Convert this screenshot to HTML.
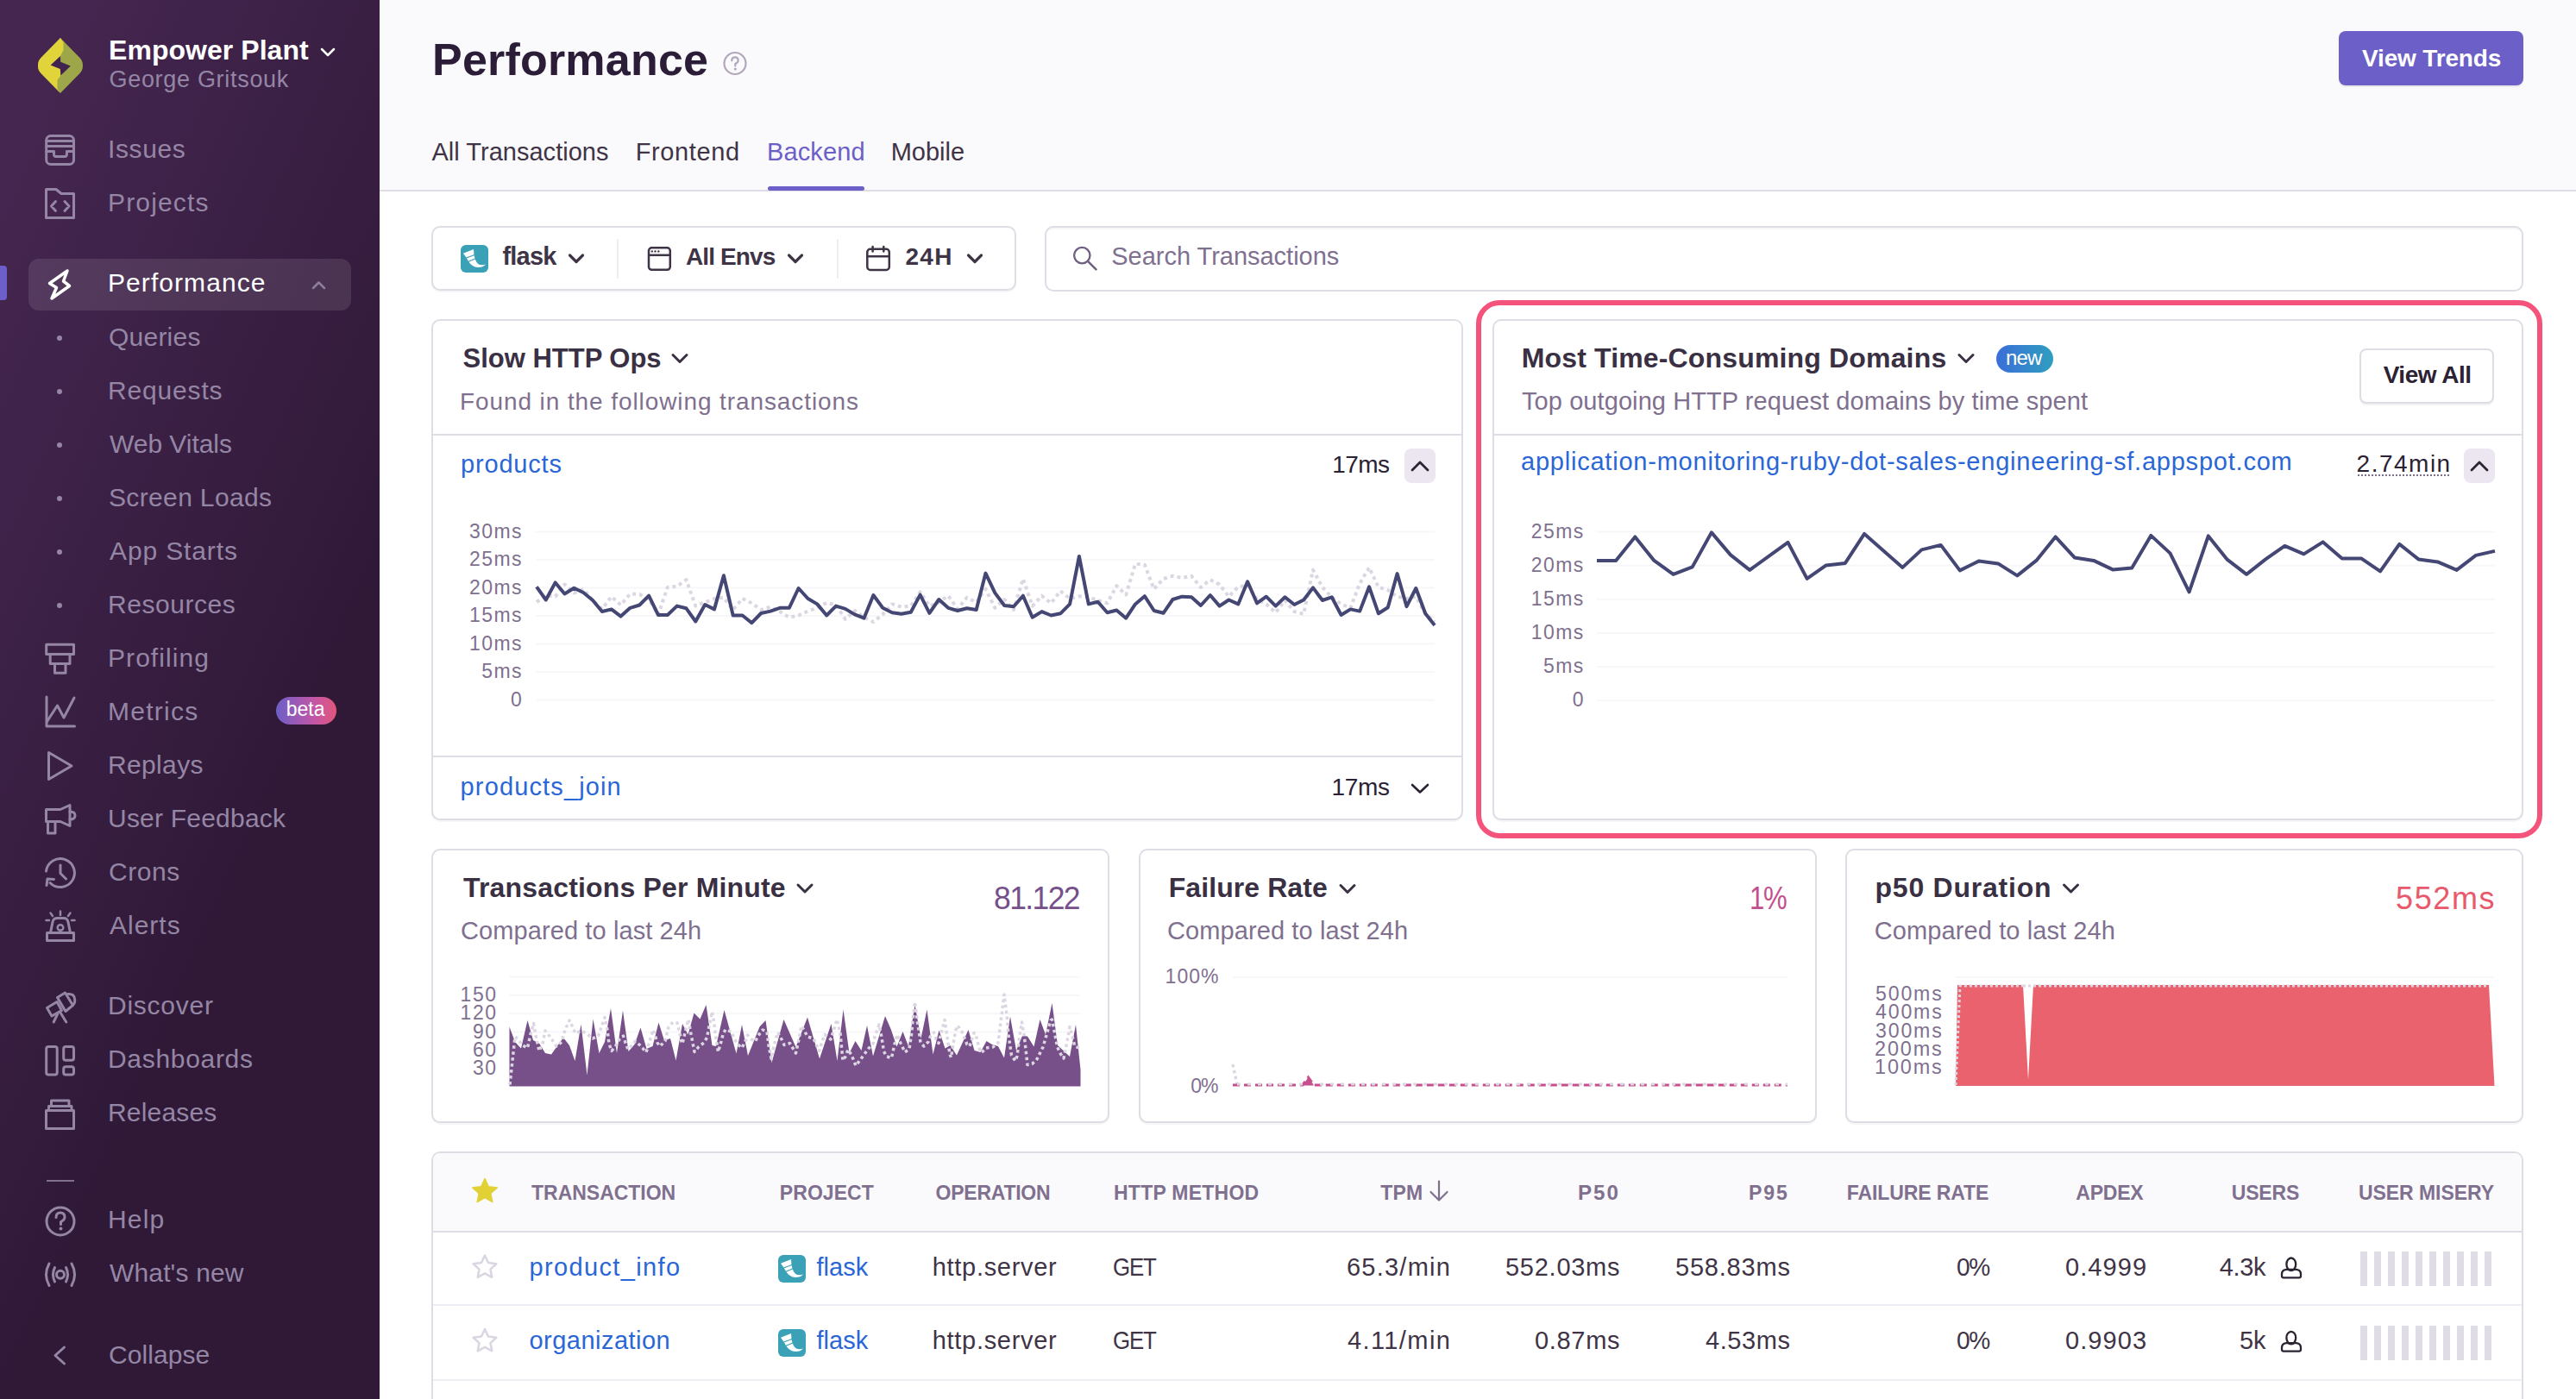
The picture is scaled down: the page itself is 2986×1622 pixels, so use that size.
<!DOCTYPE html>
<html><head><meta charset="utf-8"><style>
html,body{margin:0;padding:0;}
body{width:2986px;height:1622px;overflow:hidden;position:relative;background:#fff;font-family:"Liberation Sans", sans-serif;}
</style></head><body>
<div style="position:absolute;left:0px;top:0px;width:440px;height:1622px;background:linear-gradient(294.17deg,#2f1937 35.57%,#452650 92.42%,#452650 92.42%);z-index:0"></div><div style="position:absolute;left:440px;top:0px;width:2546px;height:220px;background:#FAF9FB;border-bottom:2px solid #E0DCE5;z-index:0"></div><div style="position:absolute;left:33px;top:300px;width:374px;height:60px;background:rgba(255,255,255,0.10);border-radius:12px;z-index:1"></div><div style="position:absolute;left:0px;top:308px;width:8px;height:40px;background:#6C5FC7;border-radius:0 4px 4px 0;z-index:1"></div><div style="position:absolute;left:320px;top:808px;width:70px;height:32px;background:linear-gradient(90deg,#6C5FC7,#C056A8 60%,#E1567C);border-radius:16px;z-index:1"></div><div style="position:absolute;left:2711px;top:36px;width:214px;height:63px;background:#6C5FC7;border-radius:8px;box-shadow:0 2px 0 rgba(43,34,51,0.08);z-index:1"></div><div style="position:absolute;left:890px;top:216px;width:112px;height:5px;background:#6C5FC7;border-radius:3px;z-index:2"></div><div style="position:absolute;left:500px;top:262px;width:678px;height:75px;box-sizing:border-box;border:2px solid #E0DCE5;border-radius:10px;background:#fff;box-shadow:0 2px 0 rgba(43,34,51,0.04);z-index:1"></div><div style="position:absolute;left:715px;top:277px;width:2px;height:46px;background:#F0ECF3;z-index:2"></div><div style="position:absolute;left:970px;top:277px;width:2px;height:46px;background:#F0ECF3;z-index:2"></div><div style="position:absolute;left:1211px;top:262px;width:1714px;height:76px;box-sizing:border-box;border:2px solid #E0DCE5;border-radius:10px;background:#fff;box-shadow:inset 0 2px 0 rgba(43,34,51,0.04);z-index:1"></div><div style="position:absolute;left:500px;top:370px;width:1196px;height:581px;box-sizing:border-box;border:2px solid #E0DCE5;border-radius:10px;background:#fff;box-shadow:0 2px 0 rgba(43,34,51,0.04);z-index:1"></div><div style="position:absolute;left:502px;top:503px;width:1192px;height:2px;background:#E0DCE5;z-index:2"></div><div style="position:absolute;left:1628px;top:520px;width:36px;height:40px;background:#EBE6EF;border-radius:8px;z-index:2"></div><div style="position:absolute;left:502px;top:876px;width:1192px;height:2px;background:#E0DCE5;z-index:2"></div><div style="position:absolute;left:1711px;top:348px;width:1236px;height:624px;box-sizing:border-box;border:6px solid #F4547B;border-radius:27px;z-index:4"></div><div style="position:absolute;left:1730px;top:370px;width:1195px;height:581px;box-sizing:border-box;border:2px solid #E0DCE5;border-radius:10px;background:#fff;box-shadow:0 2px 0 rgba(43,34,51,0.04);z-index:1"></div><div style="position:absolute;left:2314px;top:400px;width:66px;height:32px;background:linear-gradient(90deg,#3B6ED8,#2F9EC0);border-radius:16px;z-index:2"></div><div style="position:absolute;left:2735px;top:404px;width:156px;height:64px;box-sizing:border-box;border:2px solid #E0DCE5;border-radius:8px;background:#fff;box-shadow:0 2px 0 rgba(43,34,51,0.06);z-index:2"></div><div style="position:absolute;left:1732px;top:503px;width:1191px;height:2px;background:#E0DCE5;z-index:2"></div><div style="position:absolute;left:2733px;top:550px;width:106px;height:2px;background:repeating-linear-gradient(90deg,#80708F 0 2px,transparent 2px 4px);z-index:6"></div><div style="position:absolute;left:2856px;top:520px;width:36px;height:40px;background:#EBE6EF;border-radius:8px;z-index:2"></div><div style="position:absolute;left:500px;top:984px;width:786px;height:318px;box-sizing:border-box;border:2px solid #E0DCE5;border-radius:10px;background:#fff;box-shadow:0 2px 0 rgba(43,34,51,0.04);z-index:1"></div><div style="position:absolute;left:1320px;top:984px;width:786px;height:318px;box-sizing:border-box;border:2px solid #E0DCE5;border-radius:10px;background:#fff;box-shadow:0 2px 0 rgba(43,34,51,0.04);z-index:1"></div><div style="position:absolute;left:2139px;top:984px;width:786px;height:318px;box-sizing:border-box;border:2px solid #E0DCE5;border-radius:10px;background:#fff;box-shadow:0 2px 0 rgba(43,34,51,0.04);z-index:1"></div><div style="position:absolute;left:500px;top:1335px;width:2425px;height:400px;box-sizing:border-box;border:2px solid #E0DCE5;border-radius:10px;background:#fff;overflow:hidden;z-index:1"></div><div style="position:absolute;left:502px;top:1337px;width:2421px;height:91px;background:#FAF9FB;border-radius:8px 8px 0 0;z-index:1"></div><div style="position:absolute;left:502px;top:1427px;width:2421px;height:2px;background:#E0DCE5;z-index:2"></div><div style="position:absolute;left:502px;top:1512px;width:2421px;height:2px;background:#F0ECF3;z-index:2"></div><div style="position:absolute;left:502px;top:1599px;width:2421px;height:2px;background:#F0ECF3;z-index:2"></div><div style="position:absolute;left:2736px;top:1451.2px;width:8px;height:40px;background:#E0DCE5;z-index:2"></div><div style="position:absolute;left:2752px;top:1451.2px;width:8px;height:40px;background:#E0DCE5;z-index:2"></div><div style="position:absolute;left:2768px;top:1451.2px;width:8px;height:40px;background:#E0DCE5;z-index:2"></div><div style="position:absolute;left:2784px;top:1451.2px;width:8px;height:40px;background:#E0DCE5;z-index:2"></div><div style="position:absolute;left:2800px;top:1451.2px;width:8px;height:40px;background:#E0DCE5;z-index:2"></div><div style="position:absolute;left:2816px;top:1451.2px;width:8px;height:40px;background:#E0DCE5;z-index:2"></div><div style="position:absolute;left:2832px;top:1451.2px;width:8px;height:40px;background:#E0DCE5;z-index:2"></div><div style="position:absolute;left:2848px;top:1451.2px;width:8px;height:40px;background:#E0DCE5;z-index:2"></div><div style="position:absolute;left:2864px;top:1451.2px;width:8px;height:40px;background:#E0DCE5;z-index:2"></div><div style="position:absolute;left:2880px;top:1451.2px;width:8px;height:40px;background:#E0DCE5;z-index:2"></div><div style="position:absolute;left:2736px;top:1536.5px;width:8px;height:40px;background:#E0DCE5;z-index:2"></div><div style="position:absolute;left:2752px;top:1536.5px;width:8px;height:40px;background:#E0DCE5;z-index:2"></div><div style="position:absolute;left:2768px;top:1536.5px;width:8px;height:40px;background:#E0DCE5;z-index:2"></div><div style="position:absolute;left:2784px;top:1536.5px;width:8px;height:40px;background:#E0DCE5;z-index:2"></div><div style="position:absolute;left:2800px;top:1536.5px;width:8px;height:40px;background:#E0DCE5;z-index:2"></div><div style="position:absolute;left:2816px;top:1536.5px;width:8px;height:40px;background:#E0DCE5;z-index:2"></div><div style="position:absolute;left:2832px;top:1536.5px;width:8px;height:40px;background:#E0DCE5;z-index:2"></div><div style="position:absolute;left:2848px;top:1536.5px;width:8px;height:40px;background:#E0DCE5;z-index:2"></div><div style="position:absolute;left:2864px;top:1536.5px;width:8px;height:40px;background:#E0DCE5;z-index:2"></div><div style="position:absolute;left:2880px;top:1536.5px;width:8px;height:40px;background:#E0DCE5;z-index:2"></div><svg style="position:absolute;left:0;top:0;z-index:3" width="2986" height="1622" viewBox="0 0 2986 1622"><rect x="621" y="615.5" width="1042" height="2" fill="#F7F6F9"/><rect x="621" y="648.0" width="1042" height="2" fill="#F7F6F9"/><rect x="621" y="680.5" width="1042" height="2" fill="#F7F6F9"/><rect x="621" y="713.1" width="1042" height="2" fill="#F7F6F9"/><rect x="621" y="745.6" width="1042" height="2" fill="#F7F6F9"/><rect x="621" y="778.1" width="1042" height="2" fill="#F7F6F9"/><rect x="621" y="810.6" width="1042" height="2" fill="#F7F6F9"/><path d="M622.0,698.0 L632.8,690.6 L643.7,691.7 L654.5,677.6 L665.4,687.4 L676.2,683.0 L687.1,696.0 L697.9,706.0 L708.8,691.7 L719.6,701.5 L730.4,688.5 L741.3,689.0 L752.1,695.0 L763.0,712.4 L773.8,680.9 L784.7,679.8 L795.5,672.2 L806.3,702.6 L817.2,698.3 L828.0,694.0 L838.9,692.8 L849.7,707.0 L860.6,694.0 L871.4,699.3 L882.2,707.0 L893.1,703.7 L903.9,709.0 L914.8,715.7 L925.6,713.5 L936.5,708.6 L947.3,704.8 L958.2,698.8 L969.0,701.5 L979.8,717.8 L990.7,708.0 L1001.5,715.7 L1012.4,721.0 L1023.2,712.4 L1034.1,700.4 L1044.9,703.7 L1055.8,702.6 L1066.6,686.3 L1077.4,702.6 L1088.3,698.3 L1099.1,690.7 L1110.0,706.0 L1120.8,692.8 L1131.7,698.3 L1142.5,683.0 L1153.3,704.8 L1164.2,695.0 L1175.0,707.0 L1185.9,671.0 L1196.7,702.6 L1207.6,690.7 L1218.4,699.3 L1229.2,685.2 L1240.1,694.0 L1250.9,691.2 L1261.8,692.3 L1272.6,696.0 L1283.5,699.3 L1294.3,679.2 L1305.2,689.6 L1316.0,653.7 L1326.8,654.8 L1337.7,683.0 L1348.5,671.0 L1359.4,667.8 L1370.2,670.0 L1381.1,667.8 L1391.9,680.9 L1402.8,672.2 L1413.6,677.6 L1424.4,691.7 L1435.3,680.3 L1446.1,678.7 L1457.0,695.0 L1467.8,700.4 L1478.7,710.2 L1489.5,696.0 L1500.3,709.1 L1511.2,711.8 L1522.0,660.8 L1532.9,680.9 L1543.7,692.3 L1554.6,700.4 L1565.4,704.8 L1576.2,676.5 L1587.1,658.0 L1597.9,680.9 L1608.8,684.1 L1619.6,691.7 L1630.5,694.0 L1641.3,691.7 L1652.2,711.3 L1663.0,721.0" stroke="#DCD6E2" fill="none" stroke-width="4" stroke-dasharray="4 4" stroke-linejoin="round"/><path d="M622.0,680.3 L632.8,695.5 L643.7,675.4 L654.5,688.5 L665.4,681.7 L676.2,687.0 L687.1,696.0 L697.9,709.0 L708.8,706.4 L719.6,714.6 L730.4,704.8 L741.3,701.5 L752.1,690.6 L763.0,713.0 L773.8,713.0 L784.7,702.6 L795.5,705.3 L806.3,720.5 L817.2,701.0 L828.0,706.4 L838.9,667.3 L849.7,713.5 L860.6,713.5 L871.4,722.2 L882.2,711.0 L893.1,708.6 L903.9,704.8 L914.8,704.8 L925.6,682.0 L936.5,694.0 L947.3,700.4 L958.2,713.5 L969.0,702.6 L979.8,705.9 L990.7,712.4 L1001.5,716.7 L1012.4,690.0 L1023.2,704.8 L1034.1,710.2 L1044.9,711.8 L1055.8,709.7 L1066.6,689.6 L1077.4,710.8 L1088.3,695.0 L1099.1,704.8 L1110.0,708.0 L1120.8,705.3 L1131.7,707.0 L1142.5,664.6 L1153.3,687.4 L1164.2,702.0 L1175.0,703.2 L1185.9,690.7 L1196.7,715.7 L1207.6,709.1 L1218.4,713.5 L1229.2,711.3 L1240.1,700.4 L1250.9,645.0 L1261.8,700.4 L1272.6,697.7 L1283.5,710.2 L1294.3,707.5 L1305.2,716.7 L1316.0,700.4 L1326.8,691.2 L1337.7,708.0 L1348.5,710.8 L1359.4,695.0 L1370.2,691.7 L1381.1,692.3 L1391.9,702.0 L1402.8,690.0 L1413.6,702.6 L1424.4,695.5 L1435.3,700.4 L1446.1,674.3 L1457.0,699.3 L1467.8,691.7 L1478.7,702.6 L1489.5,692.3 L1500.3,701.0 L1511.2,695.5 L1522.0,681.4 L1532.9,696.0 L1543.7,692.3 L1554.6,713.0 L1565.4,706.4 L1576.2,708.6 L1587.1,680.3 L1597.9,711.3 L1608.8,704.2 L1619.6,665.1 L1630.5,703.2 L1641.3,682.0 L1652.2,711.3 L1663.0,724.9" stroke="#444674" fill="none" stroke-width="4" stroke-linejoin="round"/><rect x="1851" y="615.5" width="1041" height="2" fill="#F7F6F9"/><rect x="1851" y="654.6" width="1041" height="2" fill="#F7F6F9"/><rect x="1851" y="693.8" width="1041" height="2" fill="#F7F6F9"/><rect x="1851" y="732.9" width="1041" height="2" fill="#F7F6F9"/><rect x="1851" y="772.1" width="1041" height="2" fill="#F7F6F9"/><rect x="1851" y="811.2" width="1041" height="2" fill="#F7F6F9"/><path d="M1851.0,649.9 L1873.1,649.9 L1895.3,622.4 L1917.4,649.9 L1939.6,665.9 L1961.7,657.4 L1983.9,617.4 L2006.0,643.4 L2028.2,660.9 L2050.3,644.9 L2072.5,628.9 L2094.6,670.9 L2116.8,655.4 L2138.9,652.9 L2161.1,618.9 L2183.2,638.4 L2205.4,657.9 L2227.5,637.4 L2249.7,631.9 L2271.8,661.4 L2294.0,650.4 L2316.1,653.4 L2338.3,667.4 L2360.4,649.9 L2382.6,622.4 L2404.7,646.4 L2426.9,649.9 L2449.0,660.4 L2471.2,658.4 L2493.3,620.9 L2515.5,641.4 L2537.6,686.3 L2559.8,621.4 L2581.9,648.9 L2604.1,665.9 L2626.2,648.4 L2648.4,632.9 L2670.5,642.4 L2692.7,628.4 L2714.8,647.4 L2737.0,647.4 L2759.1,662.4 L2781.3,630.9 L2803.4,648.4 L2825.6,651.4 L2847.7,660.9 L2869.9,643.9 L2892.0,638.9" stroke="#444674" fill="none" stroke-width="4" stroke-linejoin="round"/><rect x="590" y="1131.6" width="662" height="2" fill="#F7F6F9"/><rect x="590" y="1152.9" width="662" height="2" fill="#F7F6F9"/><rect x="590" y="1174.2" width="662" height="2" fill="#F7F6F9"/><rect x="590" y="1195.5" width="662" height="2" fill="#F7F6F9"/><rect x="590" y="1216.8" width="662" height="2" fill="#F7F6F9"/><rect x="590" y="1238.1" width="662" height="2" fill="#F7F6F9"/><path d="M590.5,1259.5 L590.5,1190.5 L597.0,1208.0 L604.0,1215.5 L611.5,1183.0 L618.0,1206.0 L625.0,1209.5 L632.0,1221.0 L639.0,1222.5 L653.0,1203.0 L660.0,1212.0 L666.5,1230.0 L673.5,1187.5 L680.5,1246.5 L687.5,1181.5 L694.5,1221.0 L701.0,1208.0 L708.0,1169.0 L715.0,1221.0 L722.0,1171.5 L728.5,1219.0 L735.5,1211.0 L742.5,1191.5 L749.5,1216.0 L756.5,1213.0 L763.5,1185.5 L770.0,1206.5 L777.0,1204.0 L783.5,1229.5 L791.0,1187.0 L797.5,1199.5 L804.5,1174.5 L811.5,1181.5 L818.5,1165.0 L825.5,1212.0 L830.0,1213.0 L839.5,1171.0 L853.5,1221.5 L860.0,1188.0 L867.0,1224.0 L880.5,1190.5 L887.5,1183.0 L894.5,1232.0 L908.5,1182.0 L922.5,1214.0 L936.0,1179.5 L950.0,1227.5 L963.5,1187.0 L970.5,1230.0 L977.5,1170.5 L984.5,1221.0 L991.5,1207.0 L998.5,1218.0 L1005.0,1189.0 L1012.0,1224.5 L1026.0,1178.0 L1033.0,1194.0 L1039.5,1213.5 L1046.5,1196.0 L1053.0,1213.0 L1060.5,1165.0 L1067.5,1204.0 L1074.5,1170.5 L1081.5,1222.5 L1088.5,1194.5 L1095.5,1215.5 L1101.5,1212.0 L1109.0,1223.5 L1122.5,1194.0 L1129.5,1218.0 L1136.5,1220.0 L1143.5,1207.0 L1150.0,1211.0 L1157.0,1213.0 L1164.0,1226.5 L1171.0,1178.5 L1178.0,1218.0 L1185.0,1201.0 L1191.0,1201.5 L1198.5,1213.5 L1205.5,1182.0 L1212.0,1199.5 L1219.5,1163.0 L1226.0,1212.0 L1233.0,1218.5 L1240.0,1225.0 L1247.0,1188.0 L1252.5,1240.0 L1252.5,1259.5 Z" stroke="none" fill="#77508A" stroke-width="0" /><path d="M591.0,1257.5 L597.0,1202.0 L601.0,1205.0 L605.0,1211.5 L611.5,1215.0 L615.0,1199.0 L618.5,1186.5 L621.5,1203.0 L625.0,1218.5 L629.0,1210.0 L632.0,1195.0 L636.0,1200.0 L641.0,1207.0 L645.0,1213.0 L651.0,1208.0 L655.0,1194.0 L660.0,1183.0 L664.0,1191.0 L667.0,1198.0 L673.5,1195.0 L680.5,1198.5 L687.0,1204.0 L693.5,1201.0 L696.0,1194.0 L701.0,1179.5 L704.0,1194.0 L706.0,1210.0 L709.0,1218.5 L714.0,1212.0 L718.0,1205.0 L722.5,1201.0 L725.0,1209.0 L728.0,1216.5 L732.0,1212.5 L736.5,1207.0 L742.5,1212.5 L749.0,1220.0 L754.0,1204.0 L757.0,1194.0 L759.5,1201.0 L762.0,1209.0 L765.0,1213.0 L771.0,1207.0 L775.0,1191.0 L780.0,1185.0 L785.0,1186.0 L787.0,1194.0 L790.5,1210.0 L792.5,1205.0 L794.0,1197.0 L798.0,1182.0 L800.5,1196.5 L802.0,1204.0 L805.0,1219.5 L810.0,1213.5 L816.0,1209.0 L819.5,1203.0 L821.0,1195.0 L822.5,1187.0 L825.5,1173.0 L828.0,1188.0 L830.0,1204.0 L832.5,1219.5 L836.0,1207.5 L838.0,1199.5 L841.0,1193.5 L848.0,1196.5 L851.0,1204.0 L855.0,1210.5 L860.0,1215.0 L864.0,1207.0 L866.5,1200.0 L871.0,1205.0 L875.5,1207.5 L879.0,1200.5 L884.0,1194.0 L889.0,1196.0 L891.0,1212.0 L894.0,1227.5 L897.0,1213.0 L901.5,1197.0 L906.0,1205.0 L909.0,1211.5 L915.5,1209.5 L922.5,1221.0 L926.0,1205.0 L929.0,1189.5 L932.5,1195.0 L936.0,1202.0 L943.0,1204.0 L949.5,1218.5 L953.0,1207.5 L956.0,1199.5 L963.0,1205.0 L967.5,1191.0 L970.0,1182.0 L974.0,1198.0 L977.0,1229.5 L980.0,1225.0 L983.0,1217.0 L987.0,1223.0 L992.0,1235.5 L997.0,1229.0 L1006.5,1216.0 L1012.0,1210.0 L1014.0,1202.0 L1019.0,1188.0 L1022.0,1203.0 L1024.5,1219.0 L1028.0,1225.0 L1033.5,1226.5 L1037.0,1210.5 L1040.0,1199.5 L1043.0,1207.5 L1049.0,1220.0 L1054.0,1216.0 L1056.5,1199.5 L1058.0,1183.5 L1060.5,1161.5 L1063.5,1185.0 L1066.0,1201.0 L1067.0,1208.5 L1071.0,1213.0 L1076.0,1208.0 L1079.0,1200.5 L1082.5,1197.0 L1085.0,1205.0 L1088.0,1209.5 L1092.0,1194.0 L1095.0,1182.5 L1097.5,1199.0 L1101.0,1222.5 L1102.5,1226.0 L1105.0,1210.0 L1108.0,1194.0 L1110.0,1189.0 L1115.0,1196.0 L1121.0,1211.0 L1124.0,1213.0 L1129.0,1197.5 L1131.0,1199.0 L1135.0,1215.0 L1137.5,1220.5 L1143.0,1215.0 L1151.0,1214.0 L1157.0,1209.0 L1160.0,1185.5 L1164.0,1153.0 L1167.0,1176.5 L1169.0,1200.0 L1172.5,1223.5 L1177.0,1230.0 L1179.0,1224.5 L1182.0,1200.5 L1184.5,1185.0 L1187.5,1203.0 L1191.0,1234.5 L1196.5,1233.5 L1202.0,1228.0 L1209.0,1214.0 L1213.5,1198.5 L1218.0,1183.0 L1219.5,1182.0 L1222.5,1197.5 L1225.5,1213.5 L1228.5,1220.5 L1233.0,1227.0 L1236.0,1212.0 L1239.0,1197.0 L1240.0,1190.5 L1244.0,1205.5 L1246.0,1213.5 L1251.5,1215.0" stroke="#DCD6E2" fill="none" stroke-width="3.5" stroke-dasharray="3.5 3.5" stroke-linejoin="round"/><rect x="1429" y="1132" width="643" height="2" fill="#F7F6F9"/><path d="M1429,1234 L1434,1257" stroke="#DCD6E2" fill="none" stroke-width="3.5" stroke-dasharray="3.5 3.5"/><path d="M1429,1258 L1510,1258 L1516.5,1249 L1523,1258 L2072,1258" stroke="#C6508E" fill="none" stroke-width="3" stroke-dasharray="8 5"/><path d="M1429,1257 L2072,1257" stroke="#DCD6E2" fill="none" stroke-width="3" stroke-dasharray="4 8" stroke-dashoffset="7"/><path d="M1510,1258.5 L1516.5,1249 L1523,1258.5 Z" stroke="none" fill="#C6508E" stroke-width="0" /><rect x="2267" y="1132" width="624" height="2" fill="#F7F6F9"/><path d="M2267,1259 L2269,1142 L2345,1142 L2351,1252 L2357,1142 L2885,1142 L2891.5,1259 Z" stroke="none" fill="#E9626E" stroke-width="0" /><path d="M2267,1258 L2272,1143 L2345,1143" stroke="#DCD6E2" fill="none" stroke-width="3" stroke-dasharray="3 3"/><path d="M2357,1143 L2885,1143" stroke="#DCD6E2" fill="none" stroke-width="3" stroke-dasharray="3 3"/><path d="M2345,1143 L2357,1143" stroke="#DCD6E2" fill="none" stroke-width="3" stroke-dasharray="3 3"/></svg><svg style="position:absolute;left:0;top:0;z-index:6" width="2986" height="1622" viewBox="0 0 2986 1622"><path d="M70,44 L47.5,67 Q44,70.5 44,76 Q44,81.5 47.5,85 L70,108 L92.5,85 Q96,81.5 96,76 Q96,70.5 92.5,67 Z" fill="#9DA649"/><path d="M70,44 L47.5,67 Q44,70.5 44,76 Q44,81.5 47.5,85 L70,108 L66.5,103 L66.5,93 L70.4,87.5 L70,65 L73.5,58 L73.5,49 Z" fill="#E1D33A"/><path d="M70,65 L58.6,75.4 L69.8,80 L70.4,87.5 L81.8,76.4 L70.2,71.8 Z" fill="#40244F"/><path d="M373,57 L380,64 L387,57" stroke="#FFFFFF" stroke-width="2.5" fill="none" stroke-linecap="round" stroke-linejoin="round"/><rect x="53.7" y="157.5" width="31.8" height="33" rx="5" stroke="#9586A5" stroke-width="3" fill="none"/><path d="M53.7,163.5 L85.5,163.5 M53.7,169.6 L85.5,169.6" stroke="#9586A5" stroke-width="3" fill="none" stroke-linecap="round" stroke-linejoin="round"/><path d="M53.7,175.6 L62.5,175.6 L62.5,179 Q62.5,181.6 65,181.6 L75,181.6 Q77.4,181.6 77.4,179 L77.4,175.6 L85.5,175.6" stroke="#9586A5" stroke-width="3" fill="none" stroke-linecap="round" stroke-linejoin="round"/><path d="M53.5,219.5 L65,219.5 L71,224.5 L85.5,224.5 L85.5,252.5 L53.5,252.5 Z" stroke="#9586A5" stroke-width="3" fill="none" stroke-linecap="round" stroke-linejoin="round"/><path d="M64.5,233.5 L59.5,239 L64.5,244.5 M75,233.5 L80,239 L75,244.5" stroke="#9586A5" stroke-width="3" fill="none" stroke-linecap="round" stroke-linejoin="round"/><path d="M78,314 L57.5,328.5 L65.5,333.5 L60,346 L80.5,331.5 L73.5,326 Z" stroke="#FFFFFF" stroke-width="3.5" fill="none" stroke-linecap="round" stroke-linejoin="round"/><path d="M363,334 L369.5,327.5 L376,334" stroke="#8D7E9C" stroke-width="2.5" fill="none" stroke-linecap="round" stroke-linejoin="round"/><circle cx="69" cy="392" r="3" fill="#9586A5"/><circle cx="69" cy="454" r="3" fill="#9586A5"/><circle cx="69" cy="516" r="3" fill="#9586A5"/><circle cx="69" cy="578" r="3" fill="#9586A5"/><circle cx="69" cy="640" r="3" fill="#9586A5"/><circle cx="69" cy="702" r="3" fill="#9586A5"/><path d="M53.7,747.3 L85.5,747.3 L85.5,758.5 L53.7,758.5 Z M58.2,758.5 L58.2,769.5 L81,769.5 L81,758.5 M63.5,769.5 L63.5,780.3 L76,780.3 L76,769.5" stroke="#9586A5" stroke-width="3" fill="none" stroke-linecap="round" stroke-linejoin="round"/><path d="M54,808 L54,842 L86.5,842" stroke="#9586A5" stroke-width="3" fill="none" stroke-linecap="round" stroke-linejoin="round"/><path d="M54.5,836.5 L66.5,818 L74,832 L86,809" stroke="#9586A5" stroke-width="3" fill="none" stroke-linecap="round" stroke-linejoin="round"/><path d="M56.5,872.5 L56.5,903.5 L83,888 Z" stroke="#9586A5" stroke-width="3" fill="none" stroke-linecap="round" stroke-linejoin="round"/><path d="M53.5,938.5 L70,938.5 L81,933.5 L81,957.5 L70,952.5 L53.5,952.5 Z" stroke="#9586A5" stroke-width="3" fill="none" stroke-linecap="round" stroke-linejoin="round"/><path d="M81,941 Q87,941 87,945.5 Q87,950 81,950" stroke="#9586A5" stroke-width="3" fill="none" stroke-linecap="round" stroke-linejoin="round"/><path d="M55.5,952.5 L55.5,966 L64,966 L64,952.5" stroke="#9586A5" stroke-width="3" fill="none" stroke-linecap="round" stroke-linejoin="round"/><path d="M53.5,1010 A16.5,16.5 0 1 1 58,1023.5" stroke="#9586A5" stroke-width="3" fill="none" stroke-linecap="round" stroke-linejoin="round"/><path d="M70,1003 L70,1012.5 L76.5,1019" stroke="#9586A5" stroke-width="3" fill="none" stroke-linecap="round" stroke-linejoin="round"/><path d="M54,1026.5 L55,1019 L62.5,1019.5" stroke="#9586A5" stroke-width="3" fill="none" stroke-linecap="round" stroke-linejoin="round"/><path d="M54.5,1081.5 L85.5,1081.5 L85.5,1090.5 L54.5,1090.5 Z" stroke="#9586A5" stroke-width="3" fill="none" stroke-linecap="round" stroke-linejoin="round"/><path d="M58.5,1081.5 L61,1069 Q62,1064.5 66,1064.5 L74,1064.5 Q78,1064.5 79,1069 L81.5,1081.5" stroke="#9586A5" stroke-width="3" fill="none" stroke-linecap="round" stroke-linejoin="round"/><circle cx="70" cy="1075.5" r="3.3" stroke="#9586A5" stroke-width="2.5" fill="none"/><path d="M70,1078.8 L70,1081.5" stroke="#9586A5" stroke-width="2.5" fill="none" stroke-linecap="round" stroke-linejoin="round"/><path d="M70,1056.5 L70,1061 M58.5,1058.5 L61,1062 M81.5,1058.5 L79,1062 M53.5,1067 L57,1067 M83,1067 L86.5,1067" stroke="#9586A5" stroke-width="2.5" fill="none" stroke-linecap="round" stroke-linejoin="round"/><path d="M54.5,1168.5 L66,1161.5 L71.5,1171.5 L60,1178 Z" stroke="#9586A5" stroke-width="3" fill="none" stroke-linecap="round" stroke-linejoin="round"/><path d="M66.5,1156.5 L75.5,1151 L84.5,1165.5 L76,1172.5 Z" stroke="#9586A5" stroke-width="3" fill="none" stroke-linecap="round" stroke-linejoin="round"/><path d="M78.5,1152.5 Q86.5,1151.5 86.8,1159.5 Q87,1163 85,1165" stroke="#9586A5" stroke-width="3" fill="none" stroke-linecap="round" stroke-linejoin="round"/><path d="M66.8,1175.5 L62.2,1185 M70,1174 L76.8,1185" stroke="#9586A5" stroke-width="3" fill="none" stroke-linecap="round" stroke-linejoin="round"/><rect x="53.7" y="1213.5" width="12.5" height="32.5" rx="2.5" stroke="#9586A5" stroke-width="3" fill="none"/><rect x="73.7" y="1213.5" width="11.8" height="15.8" rx="2.5" stroke="#9586A5" stroke-width="3" fill="none"/><rect x="73.7" y="1236.8" width="11.8" height="9.2" rx="2.5" stroke="#9586A5" stroke-width="3" fill="none"/><path d="M53.5,1287.5 L85.5,1287.5 L85.5,1308.5 L53.5,1308.5 Z" stroke="#9586A5" stroke-width="3" fill="none" stroke-linecap="round" stroke-linejoin="round"/><path d="M56.5,1287.5 L56.5,1282.5 L83,1282.5 L83,1287.5" stroke="#9586A5" stroke-width="3" fill="none" stroke-linecap="round" stroke-linejoin="round"/><path d="M59.5,1282.5 L59.5,1276 L80,1276 L80,1282.5" stroke="#9586A5" stroke-width="3" fill="none" stroke-linecap="round" stroke-linejoin="round"/><rect x="54" y="1368" width="32" height="2" fill="#9586A5" opacity="0.8"/><circle cx="70" cy="1416" r="16" stroke="#9586A5" stroke-width="3" fill="none"/><path d="M65,1411.5 Q65,1406 70,1406 Q75,1406 75,1411 Q75,1414.5 70.5,1416.5 L70.5,1419.5" stroke="#9586A5" stroke-width="3" fill="none" stroke-linecap="round" stroke-linejoin="round"/><circle cx="70.5" cy="1424.5" r="2" fill="#9586A5"/><circle cx="70" cy="1477.7" r="4.5" stroke="#9586A5" stroke-width="3" fill="none"/><path d="M63.5,1469.5 Q59.5,1477.7 63.5,1486 M76.5,1469.5 Q80.5,1477.7 76.5,1486" stroke="#9586A5" stroke-width="3" fill="none" stroke-linecap="round" stroke-linejoin="round"/><path d="M57,1465 Q50,1477.7 57,1490.5 M83,1465 Q90,1477.7 83,1490.5" stroke="#9586A5" stroke-width="3" fill="none" stroke-linecap="round" stroke-linejoin="round"/><path d="M74.5,1562 L64,1571.5 L74.5,1581" stroke="#9586A5" stroke-width="3" fill="none" stroke-linecap="round" stroke-linejoin="round"/><circle cx="852" cy="73.5" r="12.5" stroke="#B2A7BD" stroke-width="2.2" fill="none"/><path d="M848.3,70.3 Q848.3,66.3 852,66.3 Q855.7,66.3 855.7,70 Q855.7,72.5 852.3,74 L852.3,76.3" stroke="#B2A7BD" stroke-width="2.2" fill="none" stroke-linecap="round"/><circle cx="852.3" cy="80" r="1.5" fill="#B2A7BD"/><g transform="translate(534,284) scale(1.0)"><rect x="0" y="0" width="32" height="32" rx="6" fill="#3BA1B7"/><path d="M3,9.8 L15,5 L15.5,11.5 Q17,20 21,22.5 Q24,24 29,22.5 Q26,26 20,26 Q13,25.5 9,19 Q7,15 3,9.8 Z" fill="#FFFFFF"/><path d="M6.5,15 L16,11.5 M8.5,19.5 L18,15.5" stroke="#3BA1B7" stroke-width="1.3"/></g><path d="M660.5,296 L668,303.5 L675.5,296" stroke="#3E3446" stroke-width="3.2" fill="none" stroke-linecap="round" stroke-linejoin="round"/><rect x="752" y="287.3" width="24.8" height="25.5" rx="3.5" stroke="#3E3446" stroke-width="2.5" fill="none"/><path d="M752,295.8 L776.8,295.8" stroke="#3E3446" stroke-width="2.5"/><circle cx="755.8" cy="291.4" r="1.2" fill="#3E3446"/><circle cx="759.5" cy="291.4" r="1.2" fill="#3E3446"/><circle cx="763.3" cy="291.4" r="1.2" fill="#3E3446"/><path d="M914.5,296 L922,303.5 L929.5,296" stroke="#3E3446" stroke-width="3.2" fill="none" stroke-linecap="round" stroke-linejoin="round"/><rect x="1005.3" y="288.8" width="25.5" height="24.2" rx="3.5" stroke="#3E3446" stroke-width="2.5" fill="none"/><path d="M1005.3,297.2 L1030.8,297.2 M1011.6,286 L1011.6,291.5 M1024.3,286 L1024.3,291.5" stroke="#3E3446" stroke-width="2.5" stroke-linecap="round"/><path d="M1122.5,296 L1130,303.5 L1137.5,296" stroke="#3E3446" stroke-width="3.2" fill="none" stroke-linecap="round" stroke-linejoin="round"/><circle cx="1254.3" cy="296.1" r="9.2" stroke="#6F5F80" stroke-width="2.3" fill="none"/><path d="M1261,302.8 L1270.5,312.3" stroke="#6F5F80" stroke-width="2.5" stroke-linecap="round"/><path d="M780,411.5 L788,419.5 L796,411.5" stroke="#3A3043" stroke-width="3" fill="none" stroke-linecap="round" stroke-linejoin="round"/><path d="M2271,411.5 L2279,419.5 L2287,411.5" stroke="#3A3043" stroke-width="3" fill="none" stroke-linecap="round" stroke-linejoin="round"/><path d="M925,1026 L933,1034 L941,1026" stroke="#3A3043" stroke-width="3" fill="none" stroke-linecap="round" stroke-linejoin="round"/><path d="M1554,1026.5 L1562,1034.5 L1570,1026.5" stroke="#3A3043" stroke-width="3" fill="none" stroke-linecap="round" stroke-linejoin="round"/><path d="M2392.5,1026 L2400.5,1034 L2408.5,1026" stroke="#3A3043" stroke-width="3" fill="none" stroke-linecap="round" stroke-linejoin="round"/><path d="M1637,545 L1646,536 L1655,545" stroke="#2B2233" stroke-width="2.8" fill="none" stroke-linecap="round" stroke-linejoin="round"/><path d="M2865,545 L2874,536 L2883,545" stroke="#2B2233" stroke-width="2.8" fill="none" stroke-linecap="round" stroke-linejoin="round"/><path d="M1637,910 L1646,918.5 L1655,910" stroke="#2B2233" stroke-width="2.6" fill="none" stroke-linecap="round" stroke-linejoin="round"/><path d="M562.0,1366.5 L566.2,1375.7 L576.3,1376.9 L568.8,1383.7 L570.8,1393.6 L562.0,1388.7 L553.2,1393.6 L555.2,1383.7 L547.7,1376.9 L557.8,1375.7 Z" fill="#E2D135" stroke="#E2D135" stroke-width="1.5" stroke-linejoin="round"/><path d="M562.0,1455.5 L566.0,1464.0 L575.3,1465.2 L568.5,1471.6 L570.2,1480.8 L562.0,1476.3 L553.8,1480.8 L555.5,1471.6 L548.7,1465.2 L558.0,1464.0 Z" fill="none" stroke="#DBD6E1" stroke-width="2.6" stroke-linejoin="round"/><path d="M562.0,1541.0 L566.0,1549.5 L575.3,1550.7 L568.5,1557.1 L570.2,1566.3 L562.0,1561.8 L553.8,1566.3 L555.5,1557.1 L548.7,1550.7 L558.0,1549.5 Z" fill="none" stroke="#DBD6E1" stroke-width="2.6" stroke-linejoin="round"/><g transform="translate(902,1455) scale(1.0)"><rect x="0" y="0" width="32" height="32" rx="6" fill="#3BA1B7"/><path d="M3,9.8 L15,5 L15.5,11.5 Q17,20 21,22.5 Q24,24 29,22.5 Q26,26 20,26 Q13,25.5 9,19 Q7,15 3,9.8 Z" fill="#FFFFFF"/><path d="M6.5,15 L16,11.5 M8.5,19.5 L18,15.5" stroke="#3BA1B7" stroke-width="1.3"/></g><g transform="translate(902,1541) scale(1.0)"><rect x="0" y="0" width="32" height="32" rx="6" fill="#3BA1B7"/><path d="M3,9.8 L15,5 L15.5,11.5 Q17,20 21,22.5 Q24,24 29,22.5 Q26,26 20,26 Q13,25.5 9,19 Q7,15 3,9.8 Z" fill="#FFFFFF"/><path d="M6.5,15 L16,11.5 M8.5,19.5 L18,15.5" stroke="#3BA1B7" stroke-width="1.3"/></g><ellipse cx="2655.8" cy="1465.8" rx="5.4" ry="7.3" stroke="#2B2233" stroke-width="2.3" fill="none"/><path d="M2656,1471.8 L2650,1471.8 Q2645,1472.3 2645,1477.3 L2645,1479.3 Q2645,1481.3 2647,1481.3 L2665,1481.3 Q2667,1481.3 2667,1479.3 L2667,1477.3 Q2667,1472.3 2662,1471.8 Z" stroke="#2B2233" stroke-width="2.3" fill="none"/><ellipse cx="2655.8" cy="1551.1" rx="5.4" ry="7.3" stroke="#2B2233" stroke-width="2.3" fill="none"/><path d="M2656,1557.1 L2650,1557.1 Q2645,1557.6 2645,1562.6 L2645,1564.6 Q2645,1566.6 2647,1566.6 L2665,1566.6 Q2667,1566.6 2667,1564.6 L2667,1562.6 Q2667,1557.6 2662,1557.1 Z" stroke="#2B2233" stroke-width="2.3" fill="none"/><path d="M1668,1369.5 L1668,1391 M1658.5,1382 L1668,1391.5 L1677.5,1382" stroke="#80708F" stroke-width="2.2" fill="none" stroke-linecap="round" stroke-linejoin="round"/></svg>
<div style="position:absolute;left:126.00px;top:41.61px;font-size:32px;line-height:32px;font-weight:700;color:#FFFFFF;letter-spacing:0.042px;white-space:nowrap;z-index:5;">Empower Plant</div><div style="position:absolute;left:126.50px;top:78.74px;font-size:27px;line-height:27px;font-weight:400;color:#9586A5;letter-spacing:0.694px;white-space:nowrap;z-index:5;">George Gritsouk</div><div style="position:absolute;left:125.00px;top:157.60px;font-size:30px;line-height:30px;font-weight:400;color:#9586A5;letter-spacing:0.619px;white-space:nowrap;z-index:5;">Issues</div><div style="position:absolute;left:125.00px;top:219.60px;font-size:30px;line-height:30px;font-weight:400;color:#9586A5;letter-spacing:1.162px;white-space:nowrap;z-index:5;">Projects</div><div style="position:absolute;left:125.00px;top:313.41px;font-size:30px;line-height:30px;font-weight:400;color:#FFFFFF;letter-spacing:1.065px;white-space:nowrap;z-index:5;">Performance</div><div style="position:absolute;left:126.00px;top:375.61px;font-size:30px;line-height:30px;font-weight:400;color:#9586A5;letter-spacing:0.226px;white-space:nowrap;z-index:5;">Queries</div><div style="position:absolute;left:125.00px;top:437.61px;font-size:30px;line-height:30px;font-weight:400;color:#9586A5;letter-spacing:0.837px;white-space:nowrap;z-index:5;">Requests</div><div style="position:absolute;left:127.00px;top:499.61px;font-size:30px;line-height:30px;font-weight:400;color:#9586A5;letter-spacing:-0.033px;white-space:nowrap;z-index:5;">Web Vitals</div><div style="position:absolute;left:126.00px;top:561.61px;font-size:30px;line-height:30px;font-weight:400;color:#9586A5;letter-spacing:0.352px;white-space:nowrap;z-index:5;">Screen Loads</div><div style="position:absolute;left:127.00px;top:623.61px;font-size:30px;line-height:30px;font-weight:400;color:#9586A5;letter-spacing:0.870px;white-space:nowrap;z-index:5;">App Starts</div><div style="position:absolute;left:125.00px;top:685.61px;font-size:30px;line-height:30px;font-weight:400;color:#9586A5;letter-spacing:0.538px;white-space:nowrap;z-index:5;">Resources</div><div style="position:absolute;left:125.00px;top:747.61px;font-size:30px;line-height:30px;font-weight:400;color:#9586A5;letter-spacing:1.063px;white-space:nowrap;z-index:5;">Profiling</div><div style="position:absolute;left:125.00px;top:809.61px;font-size:30px;line-height:30px;font-weight:400;color:#9586A5;letter-spacing:1.272px;white-space:nowrap;z-index:5;">Metrics</div><div style="position:absolute;left:125.00px;top:871.61px;font-size:30px;line-height:30px;font-weight:400;color:#9586A5;letter-spacing:0.353px;white-space:nowrap;z-index:5;">Replays</div><div style="position:absolute;left:125.00px;top:933.61px;font-size:30px;line-height:30px;font-weight:400;color:#9586A5;letter-spacing:0.215px;white-space:nowrap;z-index:5;">User Feedback</div><div style="position:absolute;left:126.00px;top:995.61px;font-size:30px;line-height:30px;font-weight:400;color:#9586A5;letter-spacing:0.544px;white-space:nowrap;z-index:5;">Crons</div><div style="position:absolute;left:127.00px;top:1057.61px;font-size:30px;line-height:30px;font-weight:400;color:#9586A5;letter-spacing:1.003px;white-space:nowrap;z-index:5;">Alerts</div><div style="position:absolute;left:125.00px;top:1150.61px;font-size:30px;line-height:30px;font-weight:400;color:#9586A5;letter-spacing:0.757px;white-space:nowrap;z-index:5;">Discover</div><div style="position:absolute;left:125.00px;top:1213.11px;font-size:30px;line-height:30px;font-weight:400;color:#9586A5;letter-spacing:0.693px;white-space:nowrap;z-index:5;">Dashboards</div><div style="position:absolute;left:125.00px;top:1275.11px;font-size:30px;line-height:30px;font-weight:400;color:#9586A5;letter-spacing:0.176px;white-space:nowrap;z-index:5;">Releases</div><div style="position:absolute;left:125.00px;top:1398.61px;font-size:30px;line-height:30px;font-weight:400;color:#9586A5;letter-spacing:1.195px;white-space:nowrap;z-index:5;">Help</div><div style="position:absolute;left:127.00px;top:1461.11px;font-size:30px;line-height:30px;font-weight:400;color:#9586A5;letter-spacing:0.150px;white-space:nowrap;z-index:5;">What's new</div><div style="position:absolute;left:126.00px;top:1555.61px;font-size:30px;line-height:30px;font-weight:400;color:#9586A5;letter-spacing:0.064px;white-space:nowrap;z-index:5;">Collapse</div><div style="position:absolute;left:331.70px;top:810.83px;font-size:23px;line-height:23px;font-weight:400;color:#FFFFFF;letter-spacing:0.009px;white-space:nowrap;z-index:5;">beta</div><div style="position:absolute;left:501.00px;top:42.68px;font-size:52px;line-height:52px;font-weight:700;color:#2B1D38;letter-spacing:0.200px;white-space:nowrap;z-index:5;">Performance</div><div style="position:absolute;left:2738.00px;top:54.00px;font-size:28px;line-height:28px;font-weight:700;color:#FFFFFF;letter-spacing:-0.161px;white-space:nowrap;z-index:5;">View Trends</div><div style="position:absolute;left:500.50px;top:161.75px;font-size:29px;line-height:29px;font-weight:400;color:#3E3446;letter-spacing:0.018px;white-space:nowrap;z-index:5;">All Transactions</div><div style="position:absolute;left:736.70px;top:161.75px;font-size:29px;line-height:29px;font-weight:400;color:#3E3446;letter-spacing:0.623px;white-space:nowrap;z-index:5;">Frontend</div><div style="position:absolute;left:889.00px;top:161.75px;font-size:29px;line-height:29px;font-weight:400;color:#6C5FC7;letter-spacing:0.129px;white-space:nowrap;z-index:5;">Backend</div><div style="position:absolute;left:1032.70px;top:161.75px;font-size:29px;line-height:29px;font-weight:400;color:#3E3446;letter-spacing:0.000px;white-space:nowrap;z-index:5;">Mobile</div><div style="position:absolute;left:582.50px;top:283.45px;font-size:29px;line-height:29px;font-weight:700;color:#3E3446;letter-spacing:-0.818px;white-space:nowrap;z-index:5;">flask</div><div style="position:absolute;left:795.00px;top:284.30px;font-size:28px;line-height:28px;font-weight:700;color:#3E3446;letter-spacing:-0.873px;white-space:nowrap;z-index:5;">All Envs</div><div style="position:absolute;left:1049.40px;top:284.30px;font-size:28px;line-height:28px;font-weight:700;color:#3E3446;letter-spacing:1.328px;white-space:nowrap;z-index:5;">24H</div><div style="position:absolute;left:1288.30px;top:283.25px;font-size:29px;line-height:29px;font-weight:400;color:#80708F;letter-spacing:-0.021px;white-space:nowrap;z-index:5;">Search Transactions</div><div style="position:absolute;left:536.60px;top:400.06px;font-size:31px;line-height:31px;font-weight:700;color:#3A3043;letter-spacing:-0.021px;white-space:nowrap;z-index:5;">Slow HTTP Ops</div><div style="position:absolute;left:533.00px;top:452.30px;font-size:28px;line-height:28px;font-weight:400;color:#80708F;letter-spacing:0.908px;white-space:nowrap;z-index:5;">Found in the following transactions</div><div style="position:absolute;left:534.00px;top:524.15px;font-size:29px;line-height:29px;font-weight:400;color:#2A66D6;letter-spacing:0.825px;white-space:nowrap;z-index:5;">products</div><div style="position:absolute;left:1544.20px;top:525.20px;font-size:28px;line-height:28px;font-weight:400;color:#2B2233;letter-spacing:-0.590px;white-space:nowrap;z-index:5;">17ms</div><div style="position:absolute;left:533.60px;top:898.45px;font-size:29px;line-height:29px;font-weight:400;color:#2A66D6;letter-spacing:1.136px;white-space:nowrap;z-index:5;">products_join</div><div style="position:absolute;left:1543.40px;top:899.30px;font-size:28px;line-height:28px;font-weight:400;color:#2B2233;letter-spacing:-0.290px;white-space:nowrap;z-index:5;">17ms</div><div style="position:absolute;left:1763.70px;top:398.91px;font-size:32px;line-height:32px;font-weight:700;color:#3A3043;letter-spacing:0.160px;white-space:nowrap;z-index:5;">Most Time-Consuming Domains</div><div style="position:absolute;left:2325.00px;top:402.68px;font-size:24px;line-height:24px;font-weight:400;color:#FFFFFF;letter-spacing:-0.848px;white-space:nowrap;z-index:5;">new</div><div style="position:absolute;left:1764.00px;top:451.45px;font-size:29px;line-height:29px;font-weight:400;color:#80708F;letter-spacing:0.081px;white-space:nowrap;z-index:5;">Top outgoing HTTP request domains by time spent</div><div style="position:absolute;left:2762.70px;top:421.30px;font-size:28px;line-height:28px;font-weight:700;color:#2B2233;letter-spacing:-0.483px;white-space:nowrap;z-index:5;">View All</div><div style="position:absolute;left:1763.00px;top:521.45px;font-size:29px;line-height:29px;font-weight:400;color:#2A66D6;letter-spacing:0.779px;white-space:nowrap;z-index:5;">application-monitoring-ruby-dot-sales-engineering-sf.appspot.com</div><div style="position:absolute;left:2731.60px;top:524.30px;font-size:28px;line-height:28px;font-weight:400;color:#2B2233;letter-spacing:1.493px;white-space:nowrap;z-index:5;">2.74min</div><div style="position:absolute;left:537.00px;top:1012.71px;font-size:32px;line-height:32px;font-weight:700;color:#3A3043;letter-spacing:0.169px;white-space:nowrap;z-index:5;">Transactions Per Minute</div><div style="position:absolute;left:1151.81px;top:1023.53px;font-size:36px;line-height:36px;font-weight:400;color:#76508B;letter-spacing:-1.620px;white-space:nowrap;z-index:5;transform:scaleX(0.9861);transform-origin:0 0;">81.122</div><div style="position:absolute;left:534.00px;top:1064.95px;font-size:29px;line-height:29px;font-weight:400;color:#80708F;letter-spacing:0.098px;white-space:nowrap;z-index:5;">Compared to last 24h</div><div style="position:absolute;left:1354.70px;top:1012.71px;font-size:32px;line-height:32px;font-weight:700;color:#3A3043;letter-spacing:0.084px;white-space:nowrap;z-index:5;">Failure Rate</div><div style="position:absolute;left:2028.27px;top:1023.53px;font-size:36px;line-height:36px;font-weight:400;color:#C2508D;letter-spacing:-1.620px;white-space:nowrap;z-index:5;transform:scaleX(0.8650);transform-origin:0 0;">1%</div><div style="position:absolute;left:1353.00px;top:1064.95px;font-size:29px;line-height:29px;font-weight:400;color:#80708F;letter-spacing:0.098px;white-space:nowrap;z-index:5;">Compared to last 24h</div><div style="position:absolute;left:2173.50px;top:1012.71px;font-size:32px;line-height:32px;font-weight:700;color:#3A3043;letter-spacing:0.770px;white-space:nowrap;z-index:5;">p50 Duration</div><div style="position:absolute;left:2777.00px;top:1023.53px;font-size:36px;line-height:36px;font-weight:400;color:#E8596C;letter-spacing:1.612px;white-space:nowrap;z-index:5;">552ms</div><div style="position:absolute;left:2172.80px;top:1064.95px;font-size:29px;line-height:29px;font-weight:400;color:#80708F;letter-spacing:0.098px;white-space:nowrap;z-index:5;">Compared to last 24h</div><div style="position:absolute;left:616.00px;top:1371.93px;font-size:23px;line-height:23px;font-weight:700;color:#80708F;letter-spacing:-0.017px;white-space:nowrap;z-index:5;">TRANSACTION</div><div style="position:absolute;left:903.80px;top:1371.93px;font-size:23px;line-height:23px;font-weight:700;color:#80708F;letter-spacing:0.069px;white-space:nowrap;z-index:5;">PROJECT</div><div style="position:absolute;left:1084.60px;top:1371.93px;font-size:23px;line-height:23px;font-weight:700;color:#80708F;letter-spacing:-0.252px;white-space:nowrap;z-index:5;">OPERATION</div><div style="position:absolute;left:1291.00px;top:1371.93px;font-size:23px;line-height:23px;font-weight:700;color:#80708F;letter-spacing:0.251px;white-space:nowrap;z-index:5;">HTTP METHOD</div><div style="position:absolute;left:1600.30px;top:1371.93px;font-size:23px;line-height:23px;font-weight:700;color:#80708F;letter-spacing:0.155px;white-space:nowrap;z-index:5;">TPM</div><div style="position:absolute;left:1828.65px;top:1371.93px;font-size:23px;line-height:23px;font-weight:700;color:#80708F;letter-spacing:1.840px;white-space:nowrap;z-index:5;transform:scaleX(1.0511);transform-origin:0 0;">P50</div><div style="position:absolute;left:2027.00px;top:1371.93px;font-size:23px;line-height:23px;font-weight:700;color:#80708F;letter-spacing:1.840px;white-space:nowrap;z-index:5;transform:scaleX(1.0043);transform-origin:0 0;">P95</div><div style="position:absolute;left:2140.80px;top:1371.93px;font-size:23px;line-height:23px;font-weight:700;color:#80708F;letter-spacing:-0.104px;white-space:nowrap;z-index:5;">FAILURE RATE</div><div style="position:absolute;left:2406.30px;top:1371.93px;font-size:23px;line-height:23px;font-weight:700;color:#80708F;letter-spacing:-0.225px;white-space:nowrap;z-index:5;">APDEX</div><div style="position:absolute;left:2586.70px;top:1371.93px;font-size:23px;line-height:23px;font-weight:700;color:#80708F;letter-spacing:-0.150px;white-space:nowrap;z-index:5;">USERS</div><div style="position:absolute;left:2734.00px;top:1371.93px;font-size:23px;line-height:23px;font-weight:700;color:#80708F;letter-spacing:-0.058px;white-space:nowrap;z-index:5;">USER MISERY</div><div style="position:absolute;left:613.50px;top:1455.15px;font-size:29px;line-height:29px;font-weight:400;color:#2A66D6;letter-spacing:1.365px;white-space:nowrap;z-index:5;">product_info</div><div style="position:absolute;left:946.50px;top:1455.15px;font-size:29px;line-height:29px;font-weight:400;color:#2A66D6;letter-spacing:0.018px;white-space:nowrap;z-index:5;">flask</div><div style="position:absolute;left:1080.80px;top:1455.15px;font-size:29px;line-height:29px;font-weight:400;color:#3E3446;letter-spacing:0.686px;white-space:nowrap;z-index:5;">http.server</div><div style="position:absolute;left:1289.91px;top:1455.15px;font-size:29px;line-height:29px;font-weight:400;color:#3E3446;letter-spacing:-1.305px;white-space:nowrap;z-index:5;transform:scaleX(0.8918);transform-origin:0 0;">GET</div><div style="position:absolute;left:1560.90px;top:1455.15px;font-size:29px;line-height:29px;font-weight:400;color:#3E3446;letter-spacing:1.257px;white-space:nowrap;z-index:5;">65.3/min</div><div style="position:absolute;left:1745.00px;top:1455.15px;font-size:29px;line-height:29px;font-weight:400;color:#3E3446;letter-spacing:0.735px;white-space:nowrap;z-index:5;">552.03ms</div><div style="position:absolute;left:1942.00px;top:1455.15px;font-size:29px;line-height:29px;font-weight:400;color:#3E3446;letter-spacing:0.792px;white-space:nowrap;z-index:5;">558.83ms</div><div style="position:absolute;left:2268.03px;top:1455.15px;font-size:29px;line-height:29px;font-weight:400;color:#3E3446;letter-spacing:-1.305px;white-space:nowrap;z-index:5;transform:scaleX(0.9685);transform-origin:0 0;">0%</div><div style="position:absolute;left:2394.00px;top:1455.15px;font-size:29px;line-height:29px;font-weight:400;color:#3E3446;letter-spacing:1.086px;white-space:nowrap;z-index:5;">0.4999</div><div style="position:absolute;left:2572.70px;top:1455.15px;font-size:29px;line-height:29px;font-weight:400;color:#3E3446;letter-spacing:-0.338px;white-space:nowrap;z-index:5;">4.3k</div><div style="position:absolute;left:613.50px;top:1540.45px;font-size:29px;line-height:29px;font-weight:400;color:#2A66D6;letter-spacing:0.466px;white-space:nowrap;z-index:5;">organization</div><div style="position:absolute;left:946.50px;top:1540.45px;font-size:29px;line-height:29px;font-weight:400;color:#2A66D6;letter-spacing:0.018px;white-space:nowrap;z-index:5;">flask</div><div style="position:absolute;left:1080.80px;top:1540.45px;font-size:29px;line-height:29px;font-weight:400;color:#3E3446;letter-spacing:0.686px;white-space:nowrap;z-index:5;">http.server</div><div style="position:absolute;left:1289.91px;top:1540.45px;font-size:29px;line-height:29px;font-weight:400;color:#3E3446;letter-spacing:-1.305px;white-space:nowrap;z-index:5;transform:scaleX(0.8918);transform-origin:0 0;">GET</div><div style="position:absolute;left:1561.90px;top:1540.45px;font-size:29px;line-height:29px;font-weight:400;color:#3E3446;letter-spacing:1.422px;white-space:nowrap;z-index:5;">4.11/min</div><div style="position:absolute;left:1779.00px;top:1540.45px;font-size:29px;line-height:29px;font-weight:400;color:#3E3446;letter-spacing:0.680px;white-space:nowrap;z-index:5;">0.87ms</div><div style="position:absolute;left:1977.00px;top:1540.45px;font-size:29px;line-height:29px;font-weight:400;color:#3E3446;letter-spacing:0.560px;white-space:nowrap;z-index:5;">4.53ms</div><div style="position:absolute;left:2268.03px;top:1540.45px;font-size:29px;line-height:29px;font-weight:400;color:#3E3446;letter-spacing:-1.305px;white-space:nowrap;z-index:5;transform:scaleX(0.9685);transform-origin:0 0;">0%</div><div style="position:absolute;left:2394.00px;top:1540.45px;font-size:29px;line-height:29px;font-weight:400;color:#3E3446;letter-spacing:1.086px;white-space:nowrap;z-index:5;">0.9903</div><div style="position:absolute;left:2596.00px;top:1540.45px;font-size:29px;line-height:29px;font-weight:400;color:#3E3446;letter-spacing:-0.128px;white-space:nowrap;z-index:5;">5k</div><div style="position:absolute;left:544.06px;top:604.53px;font-size:23px;line-height:23px;font-weight:400;color:#80708F;letter-spacing:1.400px;white-space:nowrap;z-index:5;">30ms</div><div style="position:absolute;left:544.06px;top:637.05px;font-size:23px;line-height:23px;font-weight:400;color:#80708F;letter-spacing:1.400px;white-space:nowrap;z-index:5;">25ms</div><div style="position:absolute;left:544.06px;top:669.57px;font-size:23px;line-height:23px;font-weight:400;color:#80708F;letter-spacing:1.400px;white-space:nowrap;z-index:5;">20ms</div><div style="position:absolute;left:544.06px;top:702.09px;font-size:23px;line-height:23px;font-weight:400;color:#80708F;letter-spacing:1.400px;white-space:nowrap;z-index:5;">15ms</div><div style="position:absolute;left:544.06px;top:734.61px;font-size:23px;line-height:23px;font-weight:400;color:#80708F;letter-spacing:1.400px;white-space:nowrap;z-index:5;">10ms</div><div style="position:absolute;left:558.25px;top:767.13px;font-size:23px;line-height:23px;font-weight:400;color:#80708F;letter-spacing:1.400px;white-space:nowrap;z-index:5;">5ms</div><div style="position:absolute;left:592.00px;top:799.65px;font-size:23px;line-height:23px;font-weight:400;color:#80708F;letter-spacing:1.400px;white-space:nowrap;z-index:5;">0</div><div style="position:absolute;left:1774.86px;top:604.53px;font-size:23px;line-height:23px;font-weight:400;color:#80708F;letter-spacing:1.400px;white-space:nowrap;z-index:5;">25ms</div><div style="position:absolute;left:1774.86px;top:643.67px;font-size:23px;line-height:23px;font-weight:400;color:#80708F;letter-spacing:1.400px;white-space:nowrap;z-index:5;">20ms</div><div style="position:absolute;left:1774.86px;top:682.81px;font-size:23px;line-height:23px;font-weight:400;color:#80708F;letter-spacing:1.400px;white-space:nowrap;z-index:5;">15ms</div><div style="position:absolute;left:1774.86px;top:721.95px;font-size:23px;line-height:23px;font-weight:400;color:#80708F;letter-spacing:1.400px;white-space:nowrap;z-index:5;">10ms</div><div style="position:absolute;left:1789.05px;top:761.09px;font-size:23px;line-height:23px;font-weight:400;color:#80708F;letter-spacing:1.400px;white-space:nowrap;z-index:5;">5ms</div><div style="position:absolute;left:1822.80px;top:800.23px;font-size:23px;line-height:23px;font-weight:400;color:#80708F;letter-spacing:1.400px;white-space:nowrap;z-index:5;">0</div><div style="position:absolute;left:533.52px;top:1141.93px;font-size:23px;line-height:23px;font-weight:400;color:#80708F;letter-spacing:1.600px;white-space:nowrap;z-index:5;">150</div><div style="position:absolute;left:533.52px;top:1163.23px;font-size:23px;line-height:23px;font-weight:400;color:#80708F;letter-spacing:1.600px;white-space:nowrap;z-index:5;">120</div><div style="position:absolute;left:547.91px;top:1184.53px;font-size:23px;line-height:23px;font-weight:400;color:#80708F;letter-spacing:1.600px;white-space:nowrap;z-index:5;">90</div><div style="position:absolute;left:547.91px;top:1205.83px;font-size:23px;line-height:23px;font-weight:400;color:#80708F;letter-spacing:1.600px;white-space:nowrap;z-index:5;">60</div><div style="position:absolute;left:547.91px;top:1227.13px;font-size:23px;line-height:23px;font-weight:400;color:#80708F;letter-spacing:1.600px;white-space:nowrap;z-index:5;">30</div><div style="position:absolute;left:1350.60px;top:1120.83px;font-size:23px;line-height:23px;font-weight:400;color:#80708F;letter-spacing:1.008px;white-space:nowrap;z-index:5;">100%</div><div style="position:absolute;left:1380.20px;top:1248.13px;font-size:23px;line-height:23px;font-weight:400;color:#80708F;letter-spacing:-0.992px;white-space:nowrap;z-index:5;">0%</div><div style="position:absolute;left:2173.80px;top:1140.53px;font-size:23px;line-height:23px;font-weight:400;color:#80708F;letter-spacing:1.840px;white-space:nowrap;z-index:5;transform:scaleX(1.0040);transform-origin:0 0;">500ms</div><div style="position:absolute;left:2173.80px;top:1162.33px;font-size:23px;line-height:23px;font-weight:400;color:#80708F;letter-spacing:1.840px;white-space:nowrap;z-index:5;transform:scaleX(1.0040);transform-origin:0 0;">400ms</div><div style="position:absolute;left:2173.80px;top:1183.53px;font-size:23px;line-height:23px;font-weight:400;color:#80708F;letter-spacing:1.840px;white-space:nowrap;z-index:5;transform:scaleX(1.0040);transform-origin:0 0;">300ms</div><div style="position:absolute;left:2172.78px;top:1205.03px;font-size:23px;line-height:23px;font-weight:400;color:#80708F;letter-spacing:1.840px;white-space:nowrap;z-index:5;transform:scaleX(1.0174);transform-origin:0 0;">200ms</div><div style="position:absolute;left:2172.78px;top:1226.23px;font-size:23px;line-height:23px;font-weight:400;color:#80708F;letter-spacing:1.840px;white-space:nowrap;z-index:5;transform:scaleX(1.0174);transform-origin:0 0;">100ms</div>

</body></html>
